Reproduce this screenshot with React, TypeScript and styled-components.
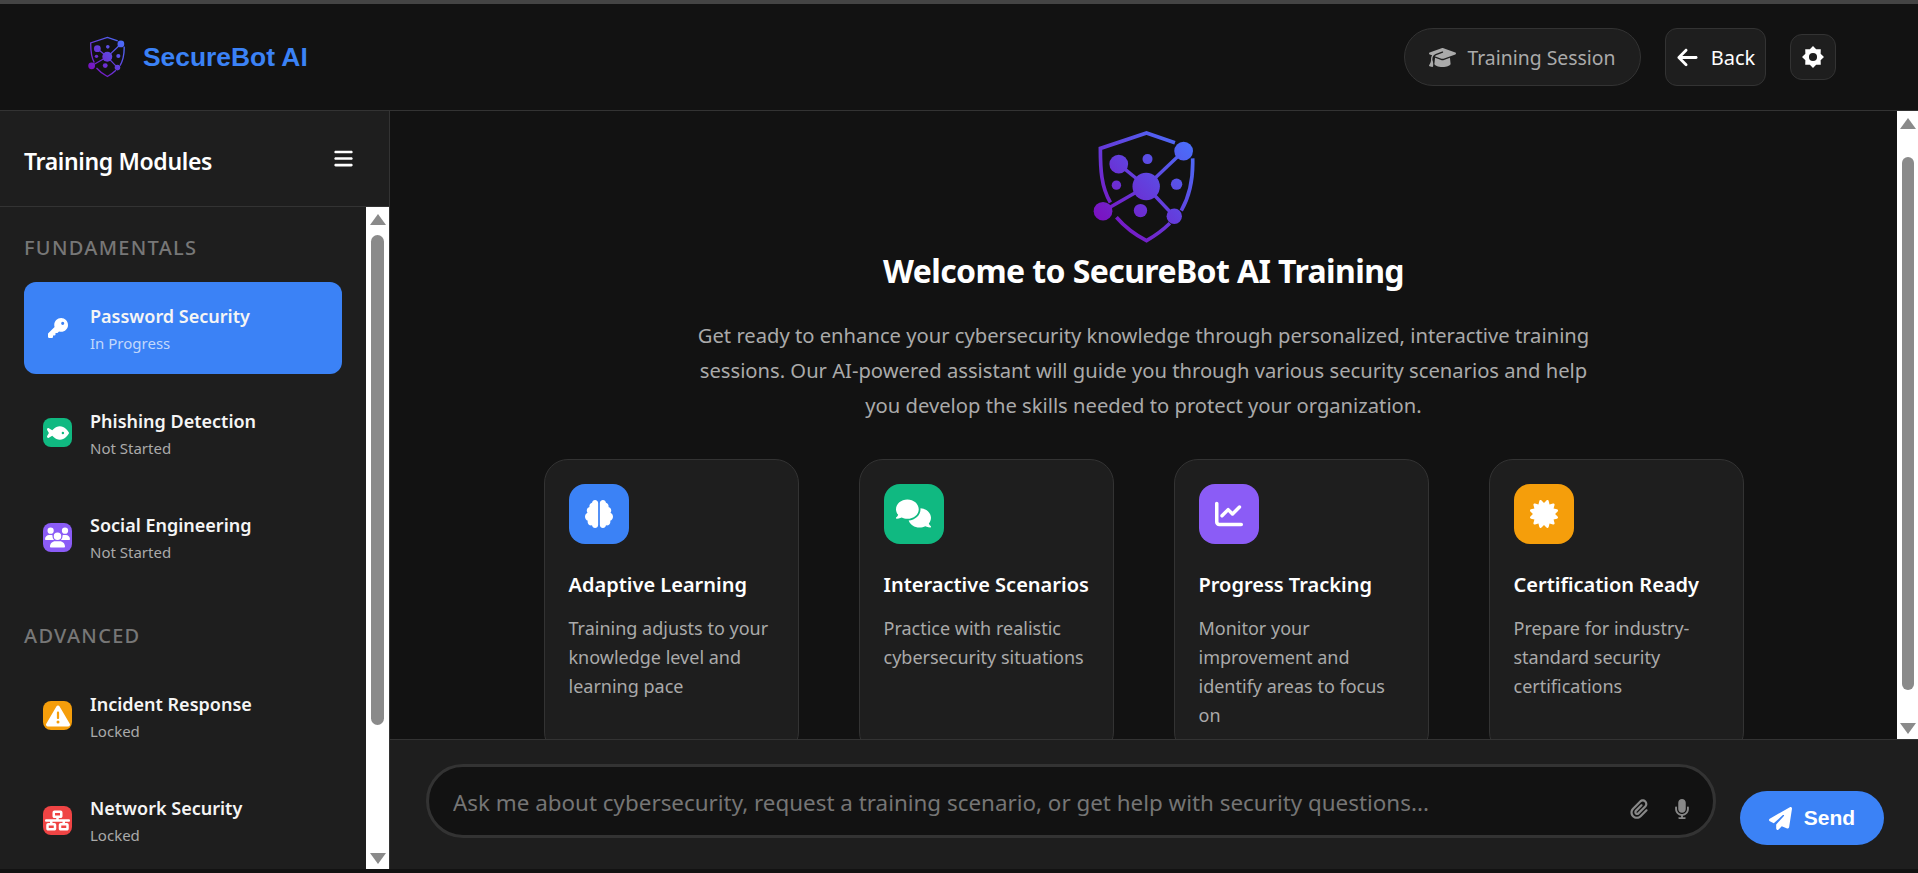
import React from "react";
import styled, { createGlobalStyle } from "styled-components";
import {
  FaArrowLeft,
  FaBars,
  FaBrain,
  FaCertificate,
  FaChartLine,
  FaComments,
  FaFish,
  FaGraduationCap,
  FaKey,
  FaMicrophone,
  FaNetworkWired,
  FaPaperclip,
  FaPaperPlane,
  FaTriangleExclamation,
  FaUsers,
} from "react-icons/fa6";

const GlobalStyle = createGlobalStyle`
  * { box-sizing: border-box; }
  html, body { margin: 0; height: 100%; overflow: hidden; background: #121212; }
  body { font-family: "Noto Sans", "Open Sans", sans-serif; color: #fff; }
`;

const Page = styled.div`
  height: 873px;
  display: flex;
  flex-direction: column;
  background: #121212;
  border-top: 4px solid #444;
`;

const Header = styled.header`
  height: 107px;
  flex: none;
  display: flex;
  align-items: center;
  justify-content: space-between;
  padding: 0 82px 0 88px;
  border-bottom: 1px solid #333;
`;

const Brand = styled.div`
  display: flex;
  align-items: center;
  gap: 18px;
`;

const BrandName = styled.span`
  font-family: "Liberation Sans", Arial, sans-serif;
  font-size: 26.4px;
  font-weight: 700;
  color: #3b82f6;
`;

const HeaderActions = styled.div`
  display: flex;
  align-items: center;
  gap: 24px;
`;

const SessionPill = styled.div`
  height: 58px;
  width: 237px;
  display: flex;
  align-items: center;
  justify-content: center;
  gap: 11px;
  border: 1px solid #333;
  border-radius: 29px;
  background: #1e1e1e;
  color: #aaa;
  font-size: 19.4px;
`;

const BackButton = styled.button`
  height: 58px;
  width: 101px;
  display: flex;
  align-items: center;
  justify-content: center;
  gap: 12px;
  border: 1px solid #333;
  border-radius: 12px;
  background: #1e1e1e;
  color: #fff;
  font: inherit;
  font-size: 20px;
`;

const GearButton = styled.button`
  width: 46px;
  height: 46px;
  display: flex;
  align-items: center;
  justify-content: center;
  border: 1px solid #333;
  border-radius: 12px;
  background: #1e1e1e;
  color: #fff;
  padding: 0;
`;

const Body = styled.div`
  flex: none;
  height: 758px;
  display: flex;
`;

const Sidebar = styled.aside`
  width: 390px;
  flex: none;
  display: flex;
  flex-direction: column;
  background: #1e1e1e;
  border-right: 1px solid #333;
`;

const SidebarHead = styled.div`
  height: 96px;
  flex: none;
  display: flex;
  align-items: center;
  justify-content: space-between;
  padding: 0 35px 0 24px;
  border-bottom: 1px solid #333;
`;

const SidebarTitle = styled.h2`
  margin: 0;
  padding-top: 4px;
  font-size: 23px;
  font-weight: 600;
  letter-spacing: -0.35px;
`;

const SidebarBody = styled.div`
  flex: 1;
  min-height: 0;
  display: flex;
`;

const ModuleList = styled.div`
  flex: 1;
  min-width: 0;
  overflow: hidden;
  padding: 24px;
`;

const SectionLabel = styled.div<{ $top?: number }>`
  height: 34px;
  line-height: 34px;
  margin: ${(p) => p.$top ?? 0}px 0 17px;
  font-size: 20px;
  font-weight: 500;
  letter-spacing: 1.3px;
  color: #777;
`;

const ModuleItem = styled.div<{ $active?: boolean }>`
  height: 92px;
  margin-bottom: 12.5px;
  display: flex;
  align-items: center;
  gap: 18px;
  padding-left: 19px;
  border-radius: 12px;
  background: ${(p) => (p.$active ? "#3b82f6" : "transparent")};
`;

const ModuleIcon = styled.div<{ $color?: string }>`
  width: 29px;
  height: 29px;
  flex: none;
  display: flex;
  align-items: center;
  justify-content: center;
  border-radius: 8px;
  background: ${(p) => p.$color ?? "transparent"};
  color: #fff;
`;

const ModuleText = styled.div`
  display: flex;
  flex-direction: column;
`;

const ModuleName = styled.div`
  font-size: 18px;
  line-height: 30px;
  font-weight: 600;
  color: #f5f5f5;
`;

const ModuleStatus = styled.div<{ $active?: boolean }>`
  font-size: 15px;
  line-height: 24px;
  color: ${(p) => (p.$active ? "rgba(255,255,255,.7)" : "#aaa")};
`;

const ScrollTrack = styled.div<{ $width: number }>`
  width: ${(p) => p.$width}px;
  flex: none;
  display: flex;
  flex-direction: column;
  align-items: center;
  background: #fff;
`;

const ScrollArrow = styled.div<{ $down?: boolean }>`
  flex: none;
  width: 0;
  height: 0;
  margin: ${(p) => (p.$down ? "auto 0 5px" : "7px 0 0")};
  border-left: 8px solid transparent;
  border-right: 8px solid transparent;
  ${(p) => (p.$down ? "border-top: 11px solid #8a8a8a;" : "border-bottom: 11px solid #8a8a8a;")}
`;

const ScrollThumb = styled.div<{ $height: number; $top: number; $width: number }>`
  width: ${(p) => p.$width}px;
  height: ${(p) => p.$height}px;
  margin-top: ${(p) => p.$top}px;
  border-radius: 7px;
  background: #8a8a8a;
`;

const Main = styled.main`
  flex: 1;
  min-width: 0;
  display: flex;
  flex-direction: column;
`;

const MainTop = styled.div`
  flex: 1;
  min-height: 0;
  display: flex;
`;

const WelcomeScroll = styled.div`
  flex: 1;
  min-width: 0;
  overflow: hidden;
  display: flex;
  flex-direction: column;
  align-items: center;
  padding-top: 20px;
  & > * {
    flex: none;
  }
`;

const WelcomeTitle = styled.h1`
  margin: 6px 0 0;
  font-size: 32px;
  line-height: 44px;
  font-weight: 700;
  letter-spacing: -0.6px;
`;

const WelcomeText = styled.p`
  margin: 25px 0 0;
  width: 900px;
  text-align: center;
  font-size: 20.2px;
  line-height: 35px;
  color: #aaa;
`;

const FeatureGrid = styled.div`
  margin-top: 35.5px;
  display: grid;
  grid-template-columns: repeat(4, 255px);
  gap: 60px;
`;

const FeatureCard = styled.div`
  padding: 24px 24px 25px;
  border: 1px solid #333;
  border-radius: 24px;
  background: #1e1e1e;
`;

const FeatureIcon = styled.div<{ $color: string }>`
  width: 60px;
  height: 60px;
  display: flex;
  align-items: center;
  justify-content: center;
  border-radius: 16px;
  background: ${(p) => p.$color};
  color: #fff;
`;

const FeatureTitle = styled.h3`
  margin: 26px 0 0;
  font-size: 20px;
  line-height: 30px;
  font-weight: 600;
  white-space: nowrap;
`;

const FeatureText = styled.p`
  margin: 14px 0 0;
  font-size: 18px;
  line-height: 29.2px;
  color: #aaa;
`;

const Composer = styled.div`
  height: 130px;
  flex: none;
  display: flex;
  align-items: flex-start;
  gap: 24px;
  padding: 24px 34px 0 36px;
  background: #1e1e1e;
  border-top: 1px solid #333;
`;

const InputBox = styled.div`
  flex: 1;
  height: 74px;
  display: flex;
  align-items: center;
  padding: 0 21px 0 24px;
  border: 3px solid #333;
  border-radius: 37px;
  background: #121212;
`;

const ChatInput = styled.input`
  flex: 1;
  min-width: 0;
  padding: 2px 0 0;
  border: none;
  outline: none;
  background: transparent;
  color: #fff;
  font: inherit;
  font-size: 22.4px;
  &::placeholder {
    color: #757575;
    opacity: 1;
  }
`;

const InputTools = styled.div`
  display: flex;
  align-items: center;
  gap: 23px;
  margin-top: 16px;
  color: #888;
`;

const SendButton = styled.button`
  width: 144px;
  height: 54px;
  margin-top: 27px;
  display: flex;
  align-items: center;
  justify-content: center;
  gap: 12px;
  border: none;
  border-radius: 27px;
  background: #3b82f6;
  color: #fff;
  font-family: "Liberation Sans", Arial, sans-serif;
  font-size: 21px;
  font-weight: 700;
`;

// 8 pointed cog with a round hole, the icon packages have no close match
const CogIcon: React.FC<{ size: number }> = ({ size }) => {
  const outer: string[] = [];
  for (let i = 0; i < 16; i++) {
    const r = i % 2 === 0 ? 12.5 : 9.4;
    const a = (i * Math.PI) / 8 - Math.PI / 2;
    outer.push(`${(12.5 + r * Math.cos(a)).toFixed(2)} ${(12.5 + r * Math.sin(a)).toFixed(2)}`);
  }
  return (
    <svg width={size} height={size} viewBox="0 0 25 25">
      <path
        fill="currentColor"
        fillRule="evenodd"
        d={`M${outer.join("L")}Z M12.5 7.9a4.6 4.6 0 1 0 0 9.2a4.6 4.6 0 1 0 0-9.2Z`}
      />
    </svg>
  );
};

const LogoMark: React.FC<{ width: number; height: number; id: string }> = ({ width, height, id }) => (
  <svg width={width} height={height} viewBox="100 58 305 335">
    <defs>
      <linearGradient id={id} x1="390" y1="90" x2="120" y2="340" gradientUnits="userSpaceOnUse">
        <stop offset="0" stopColor="#4a6ffa" />
        <stop offset="1" stopColor="#7c0fbf" />
      </linearGradient>
    </defs>
    <g fill="none" stroke={`url(#${id})`} strokeWidth="11">
      <path d="M345 93L260 64L122 110C122 170 124 225 152 272" />
      <path d="M398 140C400 205 388 255 364 296" />
      <path d="M170 316C195 345 225 368 260 386C285 372 308 355 330 334" />
    </g>
    <g stroke={`url(#${id})`} strokeWidth="10">
      <line x1="371" y1="118" x2="259" y2="224" />
      <line x1="177" y1="157" x2="259" y2="224" />
      <line x1="130" y1="298" x2="259" y2="224" />
      <line x1="343" y1="313" x2="259" y2="224" />
    </g>
    <g fill={`url(#${id})`}>
      <circle cx="371" cy="118" r="28" />
      <circle cx="177" cy="157" r="28" />
      <circle cx="263" cy="142" r="15" />
      <circle cx="170" cy="220" r="14" />
      <circle cx="350" cy="217" r="17" />
      <circle cx="259" cy="224" r="41" />
      <circle cx="130" cy="298" r="28" />
      <circle cx="242" cy="296" r="20" />
      <circle cx="343" cy="313" r="23" />
    </g>
  </svg>
);

const features = [
  { title: "Adaptive Learning", text: "Training adjusts to your knowledge level and learning pace", color: "#3b82f6", icon: <FaBrain size={28} /> },
  { title: "Interactive Scenarios", text: "Practice with realistic cybersecurity situations", color: "#10b981", icon: <FaComments size={35} /> },
  { title: "Progress Tracking", text: "Monitor your improvement and identify areas to focus on", color: "#8b5cf6", icon: <FaChartLine size={28} /> },
  { title: "Certification Ready", text: "Prepare for industry-standard security certifications", color: "#f59e0b", icon: <FaCertificate size={28} /> },
];

const App: React.FC = () => (
  <>
    <GlobalStyle />
    <Page>
      <Header>
        <Brand>
          <LogoMark width={37} height={42} id="logo-small" />
          <BrandName>SecureBot AI</BrandName>
        </Brand>
        <HeaderActions>
          <SessionPill>
            <FaGraduationCap size={27} />
            Training Session
          </SessionPill>
          <BackButton>
            <FaArrowLeft size={23} />
            Back
          </BackButton>
          <GearButton>
            <CogIcon size={22} />
          </GearButton>
        </HeaderActions>
      </Header>
      <Body>
        <Sidebar>
          <SidebarHead>
            <SidebarTitle>Training Modules</SidebarTitle>
            <FaBars size={21} />
          </SidebarHead>
          <SidebarBody>
            <ModuleList>
              <SectionLabel>FUNDAMENTALS</SectionLabel>
              <ModuleItem $active>
                <ModuleIcon>
                  <FaKey size={20} />
                </ModuleIcon>
                <ModuleText>
                  <ModuleName>Password Security</ModuleName>
                  <ModuleStatus $active>In Progress</ModuleStatus>
                </ModuleText>
              </ModuleItem>
              <ModuleItem>
                <ModuleIcon $color="#10b981">
                  <FaFish size={22} />
                </ModuleIcon>
                <ModuleText>
                  <ModuleName>Phishing Detection</ModuleName>
                  <ModuleStatus>Not Started</ModuleStatus>
                </ModuleText>
              </ModuleItem>
              <ModuleItem>
                <ModuleIcon $color="#8b5cf6">
                  <FaUsers size={25} />
                </ModuleIcon>
                <ModuleText>
                  <ModuleName>Social Engineering</ModuleName>
                  <ModuleStatus>Not Started</ModuleStatus>
                </ModuleText>
              </ModuleItem>
              <SectionLabel $top={35.5}>ADVANCED</SectionLabel>
              <ModuleItem>
                <ModuleIcon $color="#f59e0b">
                  <FaTriangleExclamation size={24} />
                </ModuleIcon>
                <ModuleText>
                  <ModuleName>Incident Response</ModuleName>
                  <ModuleStatus>Locked</ModuleStatus>
                </ModuleText>
              </ModuleItem>
              <ModuleItem>
                <ModuleIcon $color="#ef4444">
                  <FaNetworkWired size={25} />
                </ModuleIcon>
                <ModuleText>
                  <ModuleName>Network Security</ModuleName>
                  <ModuleStatus>Locked</ModuleStatus>
                </ModuleText>
              </ModuleItem>
            </ModuleList>
            <ScrollTrack $width={23}>
              <ScrollArrow />
              <ScrollThumb $height={490} $top={10} $width={13} />
              <ScrollArrow $down />
            </ScrollTrack>
          </SidebarBody>
        </Sidebar>
        <Main>
          <MainTop>
            <WelcomeScroll>
              <LogoMark width={102} height={112} id="logo-large" />
              <WelcomeTitle>Welcome to SecureBot AI Training</WelcomeTitle>
              <WelcomeText>
                Get ready to enhance your cybersecurity knowledge through personalized, interactive training sessions.
                Our AI-powered assistant will guide you through various security scenarios and help you develop the
                skills needed to protect your organization.
              </WelcomeText>
              <FeatureGrid>
                {features.map((f) => (
                  <FeatureCard key={f.title}>
                    <FeatureIcon $color={f.color}>{f.icon}</FeatureIcon>
                    <FeatureTitle>{f.title}</FeatureTitle>
                    <FeatureText>{f.text}</FeatureText>
                  </FeatureCard>
                ))}
              </FeatureGrid>
            </WelcomeScroll>
            <ScrollTrack $width={21}>
              <ScrollArrow />
              <ScrollThumb $height={533} $top={28} $width={12} />
              <ScrollArrow $down />
            </ScrollTrack>
          </MainTop>
          <Composer>
            <InputBox>
              <ChatInput placeholder="Ask me about cybersecurity, request a training scenario, or get help with security questions..." />
              <InputTools>
                <FaPaperclip size={20} />
                <FaMicrophone size={20} />
              </InputTools>
            </InputBox>
            <SendButton>
              <FaPaperPlane size={23} />
              Send
            </SendButton>
          </Composer>
        </Main>
      </Body>
    </Page>
  </>
);

export default App;
